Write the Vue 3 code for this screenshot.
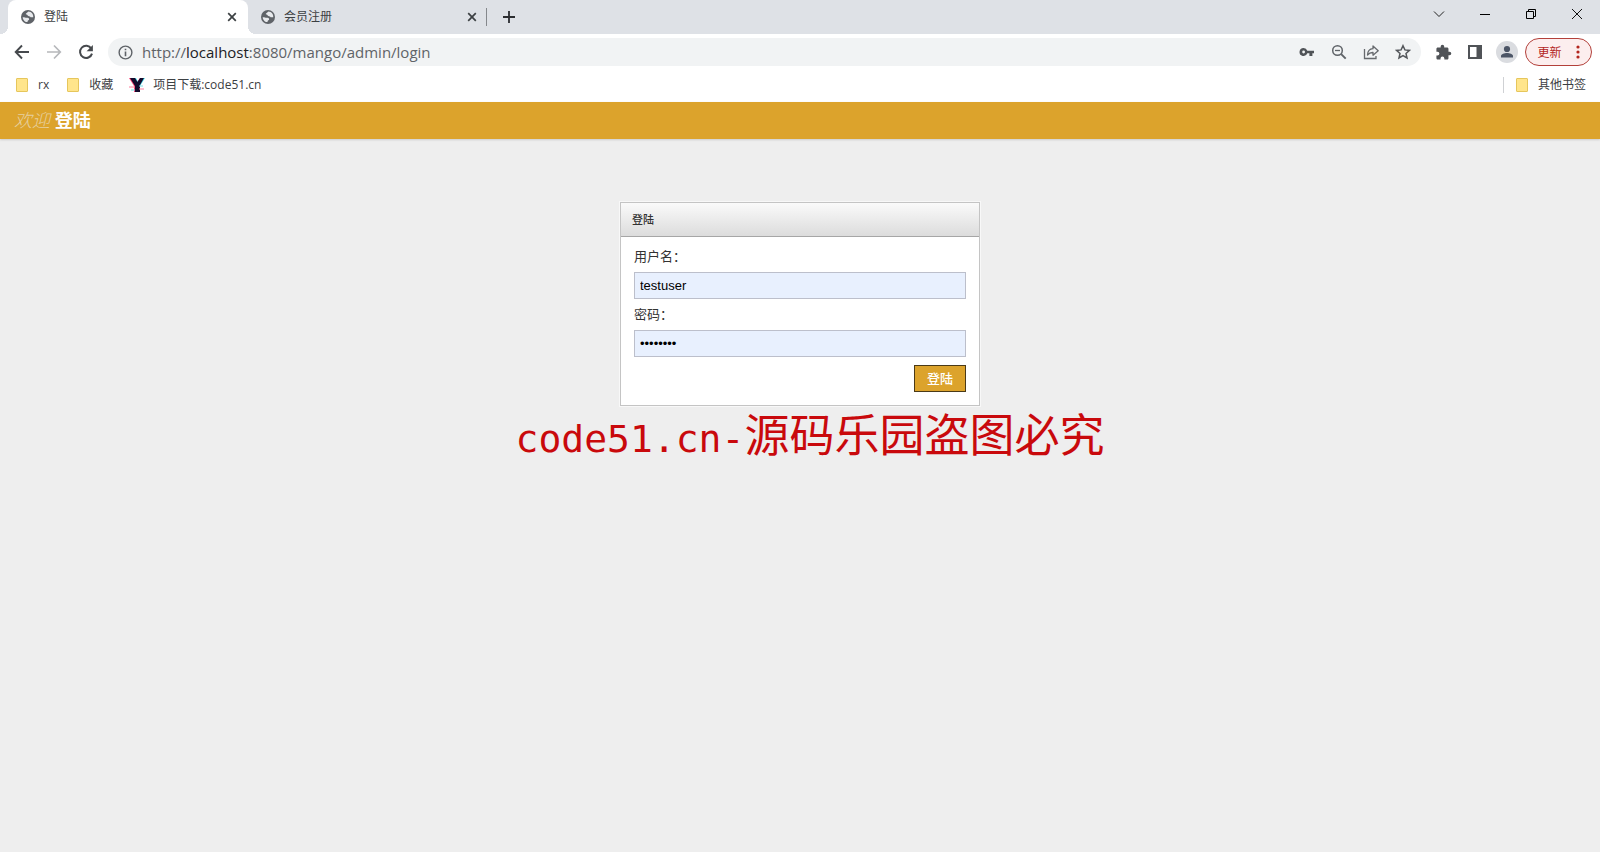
<script setup>
import { ref } from 'vue'

const tabs = [
  { title: '登陆', active: true },
  { title: '会员注册', active: false },
]
const address = { scheme: 'http://', host: 'localhost', path: ':8080/mango/admin/login' }
const username = ref('testuser')
const password = ref('password')
</script>

<template>
  <div class="browser">
    <div class="tabstrip">
      <div v-for="tab in tabs" :key="tab.title" class="tab" :class="{ active: tab.active }">
        <svg class="globe" viewBox="0 0 16 16" width="14" height="14" aria-hidden="true">
          <circle cx="8" cy="8" r="8" fill="#5f6368" />
          <path d="M8.600 1.800c-1.600.6-1.200 1.500-2.400 1.800-.9.3-1 1.300.1 1.600 1.200.3 1.500 1.800 2.900 1.900 1.500.1 1.200 1.200 2.600 1.200H14C14.300 4.700 11.800 2 8.600 1.800zM1.900 8.200c.1 2.400 1.600 4.500 3.700 5.400 1.300.5 2.100.2 2-.8-.1-1.200 1.700-1 1.700-2.300 0-1.400-1.300-1.700-2.800-1.700-1.600 0-2.500-.7-4.600-.6z" fill="#e8eaed" />
        </svg>
        <span class="tab-title">{{ tab.title }}</span>
        <button class="tab-close" :aria-label="'关闭 ' + tab.title">
          <svg viewBox="0 0 10 10" width="10" height="10"><path d="M1.200 1.200l7.600 7.600M8.800 1.200L1.200 8.800" stroke="#3c4043" stroke-width="1.700" fill="none" /></svg>
        </button>
      </div>
      <button class="new-tab" aria-label="新标签页">
        <svg viewBox="0 0 12 12" width="12" height="12"><path d="M6 0v12M0 6h12" stroke="#2b2d30" stroke-width="1.800" /></svg>
      </button>
      <div class="window-buttons">
        <button aria-label="搜索标签页"><svg viewBox="0 0 12 12" width="12" height="12"><path d="M1 3.500l5 5 5-5" fill="none" stroke="#222" /></svg></button>
        <button aria-label="最小化"><svg viewBox="0 0 12 12" width="12" height="12"><path d="M1 6.500h10" stroke="#000" /></svg></button>
        <button aria-label="还原"><svg viewBox="0 0 12 12" width="12" height="12"><path d="M1.500 3.500h7v7h-7zM3.500 3.500v-2h7v7h-2" fill="none" stroke="#000" /></svg></button>
        <button aria-label="关闭"><svg viewBox="0 0 12 12" width="12" height="12"><path d="M1 1l10 10M11 1L1 11" stroke="#111" /></svg></button>
      </div>
    </div>

    <div class="toolbar">
      <div class="nav">
        <button aria-label="后退"><svg viewBox="0 0 16 16" width="16" height="16"><path d="M15 8H2M8 1.500L1.700 8 8 14.500" fill="none" stroke="#46494d" stroke-width="1.900" /></svg></button>
        <button aria-label="前进" disabled><svg viewBox="0 0 16 16" width="16" height="16"><path d="M1 8h13M8 1.500L14.300 8 8 14.500" fill="none" stroke="#b6b8bb" stroke-width="1.700" /></svg></button>
        <button aria-label="重新加载"><svg viewBox="0 0 16 16" width="16" height="16"><path d="M13.300 4.600A6.100 6.100 0 1 0 14 9.600" fill="none" stroke="#46494d" stroke-width="2" /><path d="M14.900 1v6.300H8.600z" fill="#46494d" /></svg></button>
      </div>
      <div class="omnibox">
        <svg class="info" viewBox="0 0 16 16" width="15" height="15" aria-hidden="true"><circle cx="8" cy="8" r="6.800" fill="none" stroke="#5f6368" stroke-width="1.500" /><path d="M8 7v5M8 4v1.700" stroke="#5f6368" stroke-width="1.700" /></svg>
        <div class="url">{{ address.scheme }}<b>{{ address.host }}</b>{{ address.path }}</div>
        <div class="page-actions">
          <button aria-label="密码"><svg viewBox="0 0 16 16" width="16" height="16"><path fill-rule="evenodd" d="M4.600 4a4 4 0 1 0 3.700 5.300h2.100V12h3V9.300H15V6.700H8.300A4 4 0 0 0 4.600 4zm0 2.600a1.400 1.400 0 1 1 0 2.800 1.400 1.400 0 0 1 0-2.800z" fill="#505357" /></svg></button>
          <button aria-label="缩放"><svg viewBox="0 0 16 16" width="16" height="16"><circle cx="6.500" cy="6.500" r="4.800" fill="none" stroke="#5f6368" stroke-width="1.500" /><path d="M10.200 10.200l4.500 4.500" stroke="#5f6368" stroke-width="1.900" /><path d="M4 6.500h5" stroke="#5f6368" stroke-width="1.300" /></svg></button>
          <button aria-label="分享"><svg viewBox="0 0 16 16" width="16" height="16"><path d="M1.500 5v9.500H13V12" fill="none" stroke="#66696d" stroke-width="1.300" /><path d="M4.500 11C4.700 7.200 6.500 5 10 4.700V2l5.200 4.800L10 11.200V8.500C7.500 8.400 6 9.200 4.500 11z" fill="none" stroke="#66696d" stroke-width="1.300" stroke-linejoin="round" /></svg></button>
          <button aria-label="收藏"><svg viewBox="0 0 16 16" width="16" height="16"><path d="M8 1.700l1.900 4.200 4.600.5L11 9.500l1 4.500-4-2.400L4 14l1-4.500L1.500 6.400l4.600-.5z" fill="none" stroke="#54575b" stroke-width="1.500" /></svg></button>
        </div>
      </div>
      <div class="extras">
        <button aria-label="扩展程序"><svg viewBox="0 0 24 24" width="17" height="17"><path fill="#505357" d="M20.500 11H19V7c0-1.100-.9-2-2-2h-4V3.500a2.500 2.500 0 0 0-5 0V5H4c-1.100 0-2 .9-2 2v3.800h1.500a2.700 2.700 0 0 1 0 5.400H2V20c0 1.100.9 2 2 2h3.800v-1.500a2.700 2.700 0 0 1 5.400 0V22H17c1.100 0 2-.9 2-2v-4h1.500a2.500 2.500 0 0 0 0-5z" /></svg></button>
        <button aria-label="侧边栏"><svg viewBox="0 0 14 14" width="14" height="14"><path d="M1 1h12v12H1z" fill="#fff" stroke="#505357" stroke-width="2" /><path d="M8.500 0H14v14H8.500z" fill="#505357" /></svg></button>
        <button class="avatar" aria-label="用户"><svg viewBox="0 0 14 14" width="14" height="14"><circle cx="7" cy="4" r="3.100" fill="#4c5566" /><path d="M1 12.500V11c0-2 3.500-3 6-3s6 1 6 3v1.500z" fill="#4c5566" /></svg></button>
        <button class="update">更新
          <svg viewBox="0 0 4 14" width="4" height="14" aria-hidden="true"><g fill="#b3261e"><circle cx="2" cy="2" r="1.600" /><circle cx="2" cy="7" r="1.600" /><circle cx="2" cy="12" r="1.600" /></g></svg>
        </button>
      </div>
    </div>

    <nav class="bookmarks">
      <a href="#"><i class="folder"></i>rx</a>
      <a href="#"><i class="folder"></i>收藏</a>
      <a href="#" class="site">
        <svg viewBox="0 0 16 16" width="16" height="16" aria-hidden="true">
          <path d="M0 1h5l3 4 3-4h4L9 9v6H5V9z" fill="#ff3d74" />
          <path d="M3 1h4l2 4 3-4h4l-5 8v6H7V9z" fill="#3fdcea" />
          <path d="M1 1h5l2.500 4L11 1h4l-4 7v7H6V9z" fill="#140a2c" />
          <path d="M0 10h6M10 12h5" stroke="#ff7d9c" /><path d="M2 13h4M10 9h4" stroke="#7adfe8" />
        </svg>项目下载:code51.cn
      </a>
      <a href="#" class="other"><i class="folder"></i>其他书签</a>
    </nav>
  </div>

  <header class="welcome"><em>欢迎</em> <strong>登陆</strong></header>

  <main>
    <form class="card" @submit.prevent>
      <h1>登陆</h1>
      <div class="fields">
        <label for="username">用户名：</label>
        <input id="username" v-model="username" type="text" autocomplete="username">
        <label for="password">密码：</label>
        <input id="password" v-model="password" type="password" autocomplete="current-password">
        <button class="submit" type="submit">登陆</button>
      </div>
    </form>
    <p class="notice"><span>code51.cn-</span>源码乐园盗图必究</p>
  </main>
</template>

<style>
html {
  background: #eee;
}
</style>

<style scoped>
.browser,
.welcome,
main {
  font-family: "Open Sans", "Noto Sans CJK SC", sans-serif;
}
button {
  display: flex;
  align-items: center;
  justify-content: center;
  padding: 0;
  border: 0;
  background: none;
  font-family: inherit;
}
svg {
  display: block;
  flex: none;
}
.browser {
  background: #fff;
  color: #3c4043;
  font-size: 12px;
}
.tabstrip {
  display: flex;
  height: 34px;
  padding-left: 8px;
  background: #dee1e6;
}
.tab {
  display: flex;
  align-items: center;
  box-sizing: border-box;
  width: 240px;
  padding: 0 9px 0 13px;
  line-height: 34px;
}
.tab.active {
  position: relative;
  border-radius: 8px 8px 0 0;
  background: #fff;
}
.tab.active::before,
.tab.active::after {
  content: "";
  position: absolute;
  bottom: 0;
  width: 8px;
  height: 8px;
}
.tab.active::before {
  right: 100%;
  background: radial-gradient(circle at 0 0, #dee1e6 8px, #fff 8px);
}
.tab.active::after {
  left: 100%;
  background: radial-gradient(circle at 100% 0, #dee1e6 8px, #fff 8px);
}
.tab-title {
  flex: 1;
  margin-left: 9px;
}
.tab-close {
  width: 14px;
  height: 14px;
}
.new-tab {
  width: 44px;
  height: 18px;
  margin-top: 8px;
  margin-left: -2px;
  border-left: 1px solid #85888c;
}
.window-buttons {
  display: flex;
  margin-left: auto;
}
.window-buttons button {
  width: 46px;
  height: 28px;
}
.toolbar {
  display: flex;
  align-items: center;
  height: 36px;
  padding-right: 8px;
}
.nav {
  display: flex;
  padding: 0 6px;
}
.nav button {
  width: 32px;
  height: 28px;
}
.omnibox {
  display: flex;
  flex: 1;
  align-items: center;
  height: 28px;
  padding: 0 2px 0 10px;
  border-radius: 14px;
  background: #f1f3f4;
}
.url {
  flex: 1;
  margin-left: 9px;
  color: #5f6368;
  font-size: 15px;
  line-height: 27px;
}
.url b {
  color: #202124;
  font-weight: 400;
}
.page-actions,
.extras {
  display: flex;
  align-items: center;
}
.page-actions button,
.extras button {
  width: 32px;
  height: 28px;
}
.extras {
  padding-left: 6px;
}
.extras .avatar {
  width: 22px;
  height: 22px;
  margin: 0 7px 0 5px;
  border-radius: 50%;
  background: #dadce0;
}
.extras .update {
  box-sizing: border-box;
  gap: 14px;
  width: 67px;
  border: 1px solid #b3403a;
  border-radius: 14px;
  background: #fceeee;
  color: #b3261e;
  font-size: 12px;
}
.bookmarks {
  display: flex;
  align-items: center;
  gap: 18px;
  height: 30px;
  padding: 0 14px 2px 16px;
  line-height: 28px;
}
.bookmarks a {
  display: flex;
  align-items: center;
  gap: 10px;
  height: 28px;
  color: #3c4043;
  text-decoration: none;
}
.bookmarks .site {
  gap: 8px;
  margin-left: -2px;
}
.folder {
  box-sizing: border-box;
  width: 12px;
  height: 14px;
  border: 1px solid #e6c65c;
  border-radius: 1px;
  background: #ffe58b;
}
.bookmarks .other {
  height: 16px;
  margin-left: auto;
  padding-left: 12px;
  border-left: 1px solid #cfd1d4;
}
.welcome {
  height: 37px;
  padding-left: 14px;
  background: #dca32c;
  box-shadow: 0 1px 2px #ccc;
  color: #fff;
  font-size: 18px;
  line-height: 36px;
}
.welcome em {
  color: #e6d0a0;
  font-weight: 300;
}
main {
  display: flex;
  flex-direction: column;
  align-items: center;
  padding-top: 63px;
}
.card {
  box-sizing: border-box;
  width: 360px;
  border: 1px solid #c4c4c4;
  background: #fff;
  box-shadow: 0 0 0 1px #f8f8f8;
}
h1 {
  margin: 0;
  padding-left: 11px;
  border-bottom: 1px solid #a6a6a6;
  background: linear-gradient(#fafafa, #dcdcdc);
  color: #333;
  font-size: 11px;
  font-weight: 500;
  line-height: 33px;
}
.fields {
  display: flex;
  flex-direction: column;
  padding: 4px 13px 13px;
}
label {
  color: #333;
  font-size: 13px;
  line-height: 31px;
}
input {
  box-sizing: border-box;
  height: 27px;
  padding: 0 5px;
  border: 1px solid #bcbfcb;
  border-radius: 0;
  background: #e8f0fe;
  color: #000;
  font: 13px "Liberation Sans", sans-serif;
}
.submit {
  align-self: flex-end;
  box-sizing: border-box;
  width: 52px;
  height: 27px;
  margin-top: 8px;
  padding-bottom: 2px;
  border: 1px solid #4a3a18;
  background: #dca32c;
  color: #fff;
  font-size: 13px;
  font-weight: 500;
}
.notice {
  margin: 0 0 0 20px;
  color: #c9090c;
  font-size: 45px;
  line-height: 58px;
  white-space: nowrap;
}
.notice span {
  font-family: "DejaVu Sans Mono", monospace;
  font-size: 38px;
}
</style>
